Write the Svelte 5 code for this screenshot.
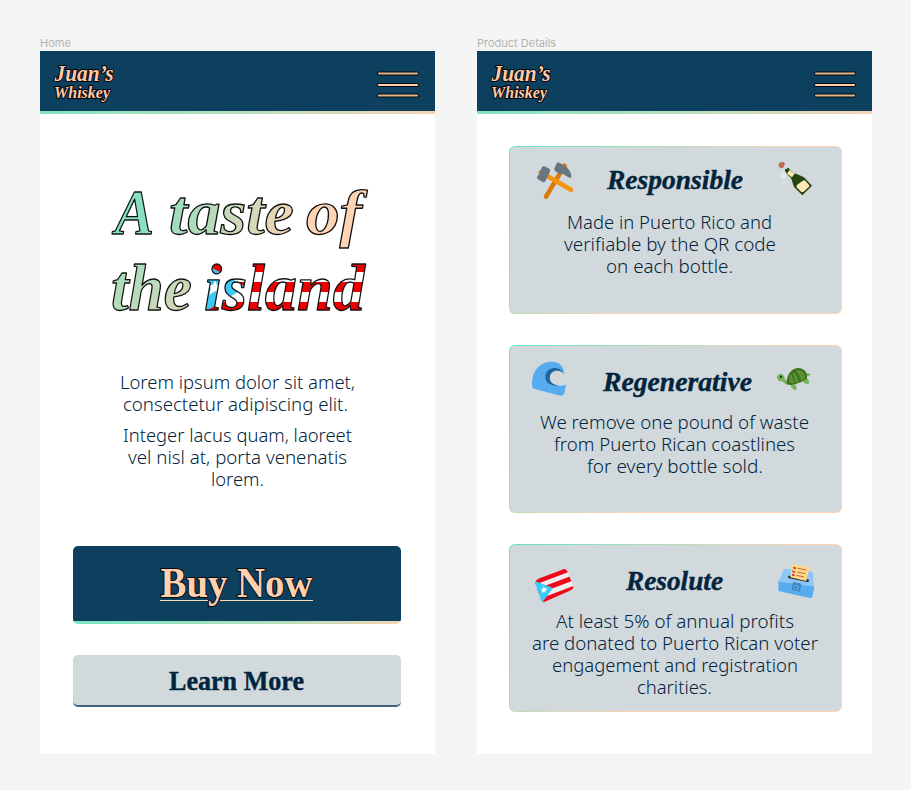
<script>
  const intro = [
    [
      { t: 'Lorem ipsum dolor sit amet,', w: 235 },
      { t: 'consectetur adipiscing elit.', w: 225, dx: -2 }
    ],
    [
      { t: 'Integer lacus quam, laoreet', w: 229 },
      { t: 'vel nisl at, porta venenatis', w: 219 },
      { t: 'lorem.', w: 53 }
    ]
  ];

  const cards = [
    {
      name: 'responsible', title: 'Responsible', w: 136, base: 38, left: hammers, right: bottle,
      lines: [
        { t: 'Made in Puerto Rico and', w: 205 },
        { t: 'verifiable by the QR code', w: 212 },
        { t: 'on each bottle.', w: 127 }
      ]
    },
    {
      name: 'regenerative', title: 'Regenerative', w: 149, base: 41, left: wave, right: turtle,
      lines: [
        { t: 'We remove one pound of waste', w: 269 },
        { t: 'from Puerto Rican coastlines', w: 241 },
        { t: 'for every bottle sold.', w: 176 }
      ]
    },
    {
      name: 'resolute', title: 'Resolute', w: 97, base: 41, left: flag, right: ballot,
      lines: [
        { t: 'At least 5% of annual profits', w: 238 },
        { t: 'are donated to Puerto Rican voter', w: 286 },
        { t: 'engagement and registration', w: 246 },
        { t: 'charities.', w: 75 }
      ]
    }
  ];
</script>

{#snippet line(l)}
  <svg class="line" width={l.w} height="22"><text x={l.dx ?? 0} y="17" textLength={l.w} lengthAdjust="spacingAndGlyphs">{l.t}</text></svg>
{/snippet}

{#snippet navbar()}
  <header class="nav">
    <svg class="logo" width="70" height="44" viewBox="0 0 70 44">
      <text x="2.5" y="22" font-size="22.5" textLength="59" lengthAdjust="spacingAndGlyphs">Juan’s</text>
      <text x="2" y="38.5" font-size="17" textLength="56" lengthAdjust="spacingAndGlyphs">Whiskey</text>
    </svg>
    <svg class="menu" width="42" height="28" viewBox="0 0 42 28">
      <g stroke-linecap="round">
        <path d="M2 2.5H40M2 14H40M2 24.5H40" stroke="#0a0a0c" stroke-width="4" />
        <path d="M2 2.5H40M2 24.5H40" stroke="#e0b592" stroke-width="2.2" />
        <path d="M2 14H40" stroke="#ffcfb0" stroke-width="2.2" />
      </g>
    </svg>
  </header>
{/snippet}

{#snippet hammers()}
  <svg class="icon" viewBox="0 3 180 180">
    <path d="M119 47L63 140" stroke="#da7a0c" stroke-width="14" stroke-linecap="round" />
    <path d="M47 67L138 119" stroke="#f7920f" stroke-width="14" stroke-linecap="round" />
    <path d="M96 38Q100 36 105 39L121 48Q138 62 139 79Q139 85 133 83L110 70L106 73L91 64Q86 60 88 55Z" fill="#66757f" />
    <path d="M57 48L73 56Q77 59 75 63L72 71L62 92Q58 98 53 96L39 88Q35 85 37 79L41 74L50 53Q53 48 57 48Z" fill="#66757f" />
  </svg>
{/snippet}

{#snippet bottle()}
  <svg class="icon" viewBox="-15 3 180 180">
    <path d="M27 40L33 37L40 36L45 40L42 48L39 54L31 54L26 49Z" fill="#c1694f" />
    <path d="M39 56L42 66L50 74L47 84L38 87L31 82L30 73L37 70Z" fill="#e1e8f0" />
    <circle cx="40" cy="96" r="6" fill="#d7dfe8" /><circle cx="44" cy="111" r="4" fill="#d9e1e8" />
    <path d="M44 59L56 53L60 61L75 70L102 82L126 107L97 136L72 111L63 84L50 71Z" fill="#234510" />
    <path d="M58 61L75 70L66 82L51 71Z" fill="#ffe2af" />
    <path d="M98 92L104 91L118 106L117 110L100 126L94 126L79 111L81 105Z" fill="#ffe8b6" />
  </svg>
{/snippet}

{#snippet wave()}
  <svg class="icon" viewBox="14 0 180 180">
    <path d="M35 107C34 55 65 34 96 35C117 36 132 50 131 72L108 65L88 78L94 102L119 107L137 104L132 128Q130 138 120 137L43 117Q35 114 35 107Z" fill="#55acee" />
    <path d="M131 72C119 47 84 48 76 73C70 94 88 111 119 107C95 104 85 92 89 77C94 61 115 56 131 72Z" fill="#226699" />
    <path d="M131 72C116 57 97 61 90 76C84 93 98 106 119 107Q130 105 137 104L144 83Z" fill="#d2d9dc" />
  </svg>
{/snippet}

{#snippet turtle()}
  <svg class="icon" viewBox="0 0 180 180">
    <path d="M121 72Q128 68 136 72Q140 75 124 80Z" fill="#77b255" />
    <path d="M36 83Q35 74 46 71Q58 73 59 86L67 96L125 83Q135 93 131 101Q123 105 116 97L114 90L90 102Q97 113 94 119Q86 122 79 112L77 104Q63 107 55 97L51 94Q39 95 36 83Z" fill="#77b255" />
    <path d="M65 101C64 77 77 56 99 54C116 54 128 67 126 84Q117 98 76 105Z" fill="#3e721d" />
    <path d="M74 99Q69 84 78 70Q82 87 90 98ZM86 67Q97 77 101 95L94 98Q86 86 83 69ZM94 62Q108 58 117 70Q122 82 117 89L107 93Q108 78 94 66Z" fill="#5c913b" />
    <circle cx="48" cy="80" r="3.5" fill="#292f33" />
  </svg>
{/snippet}

{#snippet flag()}
  <svg class="icon" viewBox="0 -18 180 180">
    <defs><clipPath id="pr-flag"><path d="M40 71L115 43Q122 40 127 49L145 94Q146 101 138 106L63 139Q54 144 48 135L31 86Q30 76 40 71Z" /></clipPath></defs>
    <g clip-path="url(#pr-flag)">
      <path d="M20 30H160V160H20Z" fill="#eee" />
      <path d="M25 83L136 41M35 110L147 68M45 139L158 96" stroke="#ed0b1b" stroke-width="15" />
      <path d="M20 74L84 99L46 150Z" fill="#3bcaf5" />
    </g>
    <path d="M56 94L59 100L67 101L62 106L63 113L57 110L51 114L52 107L47 103L54 101Z" fill="#fff" />
  </svg>
{/snippet}

{#snippet ballot()}
  <svg class="icon" viewBox="0 -18 180 180">
    <path d="M58 45H137Q144 46 145 68L149 92L40 90L52 53Q54 45 58 45Z" fill="#8cc7f7" transform="rotate(6 94 70)" />
    <path d="M41 80L148 95L142 126Q140 130 134 129L44 109Q39 107 40 102Z" fill="#55acee" />
    <path d="M73 66L128 77" stroke="#292f33" stroke-width="8" stroke-linecap="round" />
    <path d="M84 27L128 37Q133 39 132 43L124 78L76 67L80 31Q81 27 84 27Z" fill="#ffd983" />
    <path d="M85 38L93 40M82 49L90 51M81 59L89 61" stroke="#be3c3c" stroke-width="5" />
    <path d="M98 40L124 45M96 51L121 56M94 61L117 66" stroke="#c1694f" stroke-width="3" />
    <path d="M84 81L109 86L105 110L80 105Z" fill="#4289c1" />
    <circle cx="94" cy="97" r="7" fill="#67adea" /><path d="M92 94L97 95L95 101L91 100Z" fill="#226699" />
  </svg>
{/snippet}

<main>
  <section class="artboard">
    <h2>Home</h2>
    <div class="frame home">
      {@render navbar()}
      <h1>
        <svg width="280" height="150" viewBox="100 176 280 150">
          <defs>
            <linearGradient id="taste" gradientUnits="userSpaceOnUse" x1="112" y1="205" x2="304" y2="255">
              <stop offset="0" stop-color="#7de2c3" /><stop offset=".2" stop-color="#8ddfc0" /><stop offset="1" stop-color="#ffd4b5" />
            </linearGradient>
            <linearGradient id="the" gradientUnits="userSpaceOnUse" x1="125" y1="255" x2="205" y2="325">
              <stop offset="0" stop-color="#a5ddbd" /><stop offset="1" stop-color="#e2d5b6" />
            </linearGradient>
            <pattern id="flag-fill" patternUnits="userSpaceOnUse" x="195" y="252" width="190" height="70">
              <path d="M0 0H190V70H0Z" fill="#fff" />
              <path d="M0 8H190V20H0ZM0 30H190V40H0ZM0 50H190V62H0Z" fill="#ee0000" />
              <path d="M0 6L51 35L0 66Z" fill="#3bcaf5" />
              <path d="M20 28L22 33L28 33L24 37L26 43L20 39L14 43L16 37L12 33L18 33Z" fill="#fff" />
            </pattern>
          </defs>
          <g font-size="64" stroke="#111" stroke-width="1.3">
            <g fill="url(#taste)">
              <text x="115" y="234" textLength="39" lengthAdjust="spacingAndGlyphs">A</text>
              <text x="169" y="234" textLength="125" lengthAdjust="spacingAndGlyphs">taste</text>
              <text x="306" y="234" textLength="56" lengthAdjust="spacingAndGlyphs">of</text>
            </g>
            <g font-size="66">
              <text x="111" y="309.5" fill="url(#the)" textLength="81" lengthAdjust="spacingAndGlyphs">the</text>
              <text x="204" y="309.5" fill="url(#flag-fill)" textLength="161" lengthAdjust="spacingAndGlyphs">island</text>
            </g>
          </g>
        </svg>
      </h1>
      <div class="intro">
        {#each intro as paragraph}
          <p>{#each paragraph as l}{@render line(l)}{/each}</p>
        {/each}
      </div>
      <div class="actions">
        <button class="buy">
          <svg width="153" height="60">
            <path d="M0 42.5H48M60 42.5H153" stroke="#ffd4b5" />
            <text x="0.5" y="38.5" font-size="42" textLength="152" lengthAdjust="spacingAndGlyphs">Buy Now</text>
          </svg>
        </button>
        <button class="learn">
          <svg width="135" height="40"><text x="0" y="27.5" font-size="27" textLength="135" lengthAdjust="spacingAndGlyphs">Learn More</text></svg>
        </button>
      </div>
    </div>
  </section>

  <section class="artboard">
    <h2>Product Details</h2>
    <div class="frame">
      {@render navbar()}
      <div class="cards">
        {#each cards as c}
          <article class={c.name}>
            <div class="card-head">
              {@render c.left()}
              <h3><svg width={c.w} height="60"><text x="0" y={c.base} textLength={c.w} lengthAdjust="spacingAndGlyphs">{c.title}</text></svg></h3>
              {@render c.right()}
            </div>
            <p>{#each c.lines as l}{@render line(l)}{/each}</p>
          </article>
        {/each}
      </div>
    </div>
  </section>
</main>

<style>
  :global(body) { margin: 0; background: #f5f5f5; }
  main {
    display: flex;
    gap: 42px;
    width: 911px;
    height: 790px;
    padding: 36px 39px 0 40px;
    box-sizing: border-box;
    background: #f5f5f5;
    overflow: hidden;
  }
  h1, h2, h3, p { margin: 0; }
  svg { display: block; flex: none; overflow: visible; fill: none; }
  .artboard { width: 395px; flex: none; }
  h2 { height: 15px; font: 400 11px/14px Inter, sans-serif; color: #b3b3b3; }
  .frame { height: 702.5px; background: #fff; }
  .nav {
    display: flex;
    align-items: center;
    justify-content: space-between;
    height: 63px;
    box-sizing: border-box;
    padding: 0 16px 0 12px;
    border-bottom: 3px solid;
    border-image: linear-gradient(90deg, #83e2c0, #b5dfbc 50%, #f6d4b5) 1;
    background: #0d3f5e;
  }
  .menu { margin-top: 7px; }
  .logo text {
    font-family: "Liberation Serif", serif;
    font-weight: 700;
    font-style: italic;
    fill: #ffc9a8;
    stroke: #050507;
    stroke-width: 2px;
    paint-order: stroke;
  }
  h1 svg { margin: 62px 0 0 60px; }
  h1 text { font-family: "Liberation Serif", serif; font-weight: 700; font-style: italic; stroke-linejoin: round; }
  .intro { display: flex; flex-direction: column; gap: 8.5px; margin-top: 46px; }
  p { display: flex; flex-direction: column; align-items: center; }
  .line text { font: 300 18.8px "Noto Sans", "Open Sans", sans-serif; fill: #02243c; }
  .actions { display: flex; flex-direction: column; gap: 31px; margin: 55.5px 34px 0 32.5px; }
  button {
    display: flex;
    justify-content: center;
    align-items: flex-start;
    width: 100%;
    padding: 0;
    border: 0;
    border-radius: 5px;
  }
  button text { font-family: "Liberation Serif", serif; font-weight: 700; }
  .buy {
    height: 78px;
    padding-top: 12px;
    background: linear-gradient(#0d3f5e, #0d3f5e) 0 0 / 100% 75px no-repeat, linear-gradient(90deg, #78e4c3, #b0dfbc 60%, #f3d3b4);
  }
  .buy text { fill: #ffd0b0; stroke: #08090c; stroke-width: 2px; paint-order: stroke; }
  .learn { height: 51.5px; padding-top: 7px; box-sizing: border-box; border-bottom: 2px solid #3f6681; background: #d2d9dc; }
  .learn text { fill: #02243c; stroke: #02243c; stroke-width: 0.4px; }
  .cards { display: flex; flex-direction: column; gap: 31px; padding: 32px 30.5px 0 31.5px; }
  article {
    height: 168px;
    box-sizing: border-box;
    padding-top: 4px;
    border: 1.5px solid transparent;
    border-radius: 6px;
    background: linear-gradient(#d2d9dc, #d2d9dc) padding-box, linear-gradient(135deg, #60e5c0, #ffd4b5 58%) border-box;
  }
  .card-head { display: flex; justify-content: space-between; padding: 0 15.5px 0 15px; }
  .icon { width: 60px; height: 60px; overflow: hidden; }
  h3 { display: flex; justify-content: center; flex: 1; }
  h3 text { font: italic 700 27.5px "Liberation Serif", serif; fill: #02243c; stroke: #02243c; stroke-width: 0.4px; }
  article p { margin-top: 2px; padding-right: 0.5px; }
  .responsible p { margin-top: 0.5px; padding-right: 10.5px; }
  .regenerative h3 { padding-left: 5px; }
</style>
